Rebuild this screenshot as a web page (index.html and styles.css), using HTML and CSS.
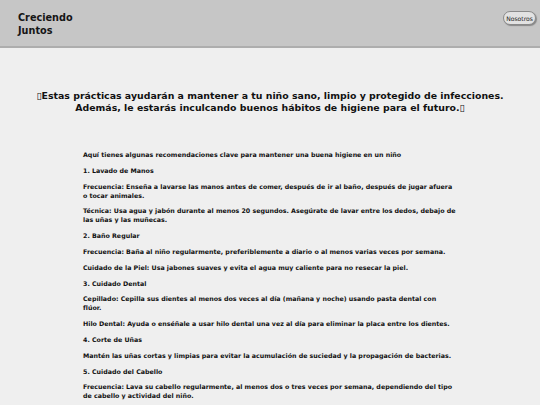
FILE: index.html
```html
<!DOCTYPE html>
<html lang="es">
<head>
<meta charset="utf-8">
<title>Creciendo Juntos</title>
<link rel="stylesheet" href="styles.css">
</head>
<body>
<header class="topbar">
  <div class="brand">Creciendo<br>Juntos</div>
  <button class="nav-btn">Nosotros</button>
</header>
<main class="content">
  <h1 class="intro">▯Estas prácticas ayudarán a mantener a tu niño sano, limpio y protegido de infecciones.<br>Además, le estarás inculcando buenos hábitos de higiene para el futuro.▯</h1>
  <section class="tips">
    <p>Aquí tienes algunas recomendaciones clave para mantener una buena higiene en un niño</p>
    <p>1. Lavado de Manos</p>
    <p>Frecuencia: Enseña a lavarse las manos antes de comer, después de ir al baño, después de jugar afuera o tocar animales.</p>
    <p>Técnica: Usa agua y jabón durante al menos 20 segundos. Asegúrate de lavar entre los dedos, debajo de las uñas y las muñecas.</p>
    <p>2. Baño Regular</p>
    <p>Frecuencia: Baña al niño regularmente, preferiblemente a diario o al menos varias veces por semana.</p>
    <p>Cuidado de la Piel: Usa jabones suaves y evita el agua muy caliente para no resecar la piel.</p>
    <p>3. Cuidado Dental</p>
    <p>Cepillado: Cepilla sus dientes al menos dos veces al día (mañana y noche) usando pasta dental con<br>flúor.</p>
    <p>Hilo Dental: Ayuda o enséñale a usar hilo dental una vez al día para eliminar la placa entre los dientes.</p>
    <p>4. Corte de Uñas</p>
    <p>Mantén las uñas cortas y limpias para evitar la acumulación de suciedad y la propagación de bacterias.</p>
    <p>5. Cuidado del Cabello</p>
    <p>Frecuencia: Lava su cabello regularmente, al menos dos o tres veces por semana, dependiendo del tipo de cabello y actividad del niño.</p>
  </section>
</main>
</body>
</html>
```
FILE: styles.css
```css
html, body {
  margin: 0;
  padding: 0;
}
body {
  background: #efefef;
  font-family: "DejaVu Sans", "Noto Sans", sans-serif;
  color: #111;
}
.topbar {
  height: 46px;
  background: #c6c6c6;
  border-bottom: 2px solid #adadad;
  display: flex;
  align-items: flex-start;
  justify-content: space-between;
  padding: 0 4px 0 18px;
}
.brand {
  margin-top: 11px;
  font-size: 9.7px;
  font-weight: bold;
  line-height: 13px;
  color: #151515;
}
.nav-btn {
  margin-top: 11px;
  height: 14px;
  padding: 0 2px;
  font-family: "DejaVu Sans", sans-serif;
  font-size: 6.1px;
  color: #222;
  background: #e2e2e2;
  border: 1px solid #8a8a8a;
  border-radius: 7px;
  box-shadow: 1px 1px 1px #888;
}
.content {
  padding-top: 42px;
}
.intro {
  margin: 0 auto;
  width: 520px;
  text-align: center;
  font-size: 9.4px;
  line-height: 12px;
  font-weight: bold;
  color: #111;
}
.tips {
  width: 375px;
  margin: 36px auto 0;
  padding-left: 1px;
}
.tips p {
  margin: 0 0 6.8px;
  font-size: 6.3px;
  line-height: 9px;
  font-weight: bold;
  color: #111;
}
```
